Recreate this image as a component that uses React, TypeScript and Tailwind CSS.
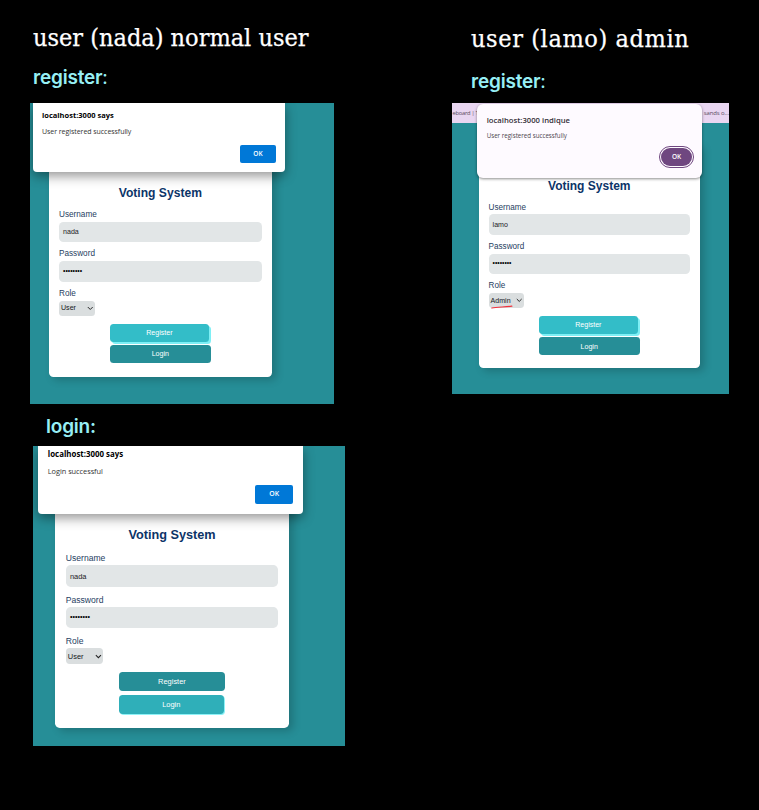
import React from "react";

type FormProps = {
  username: string;
  role: string;
  active: "register" | "login";
  underline?: boolean;
};

function Field({ label, children }: { label: string; children: React.ReactNode }) {
  return (
    <div className="flex flex-col items-start pb-[0.7em]">
      <div className="flex h-[1em] items-center pt-[0.12em]">
        <span className="text-[0.82em] leading-none text-[#26405f]">{label}</span>
      </div>
      <div className="mt-[0.23em] flex h-[2.03em] w-full items-center rounded-[0.45em] bg-[#e2e6e7] pl-[0.4em] text-[#1d2226]">
        {children}
      </div>
    </div>
  );
}

function VotingForm({ username, role, active, underline }: FormProps) {
  return (
    <div className="flex w-[22.27em] flex-col rounded-[0.45em] bg-white px-[1em] pt-[3.6em] pb-[1.37em] font-['Liberation_Sans',Arial,sans-serif] shadow-[4px_3px_8px_rgba(0,0,0,0.2)]">
      <div className="flex h-[1.2em] items-center justify-center pt-[0.1em]">
        <h2 className="text-[1.21em] leading-none font-bold text-[#0c3468]">Voting System</h2>
      </div>
      <div className="mt-[1.1em] flex flex-col">
        <Field label="Username">
          <span className="pt-[0.1em] text-[0.71em] leading-none">{username}</span>
        </Field>
        <Field label="Password">
          <span className="text-[0.68em] leading-none text-black">••••••••</span>
        </Field>
        <div className="flex h-[1em] items-center pt-[0.12em]">
          <span className="text-[0.82em] leading-none text-[#26405f]">Role</span>
        </div>
        <div className="relative mt-[0.2em] flex h-[1.54em] w-[3.57em] items-center justify-between rounded-[0.35em] bg-[#dadedf] pr-[0.15em] pl-[0.2em] text-[#16191c]">
          <span className="pt-[0.15em] text-[0.71em] leading-none">{role}</span>
          <svg viewBox="0 0 8 8" className="size-[0.65em]" fill="none" stroke="#222" strokeWidth="1.2">
            <path d="M1 2.5 4 5.5 7 2.5" />
          </svg>
          {underline && (
            <svg viewBox="0 0 22 4" className="absolute top-[1.2em] left-[0.25em] h-[0.4em] w-[2.2em]" fill="none">
              <path d="M.8 3C6 2.2 14 2 21 1.2" stroke="#f0323c" strokeWidth="1.2" strokeLinecap="round" />
            </svg>
          )}
        </div>
      </div>
      <div className="mt-[0.78em] ml-[5.07em] flex w-[10.13em] flex-col gap-[0.35em] text-white">
        {active === "register" ? (
          <>
            <div className="flex h-[1.8em] w-[9.95em] items-center justify-center rounded-[0.35em] bg-[#33bdc8] shadow-[2px_2px_0_#7eeff5]">
              <span className="pt-[0.1em] text-[0.71em] leading-none">Register</span>
            </div>
            <div className="flex h-[1.8em] items-center justify-center rounded-[0.35em] bg-[#268e97]">
              <span className="pt-[0.1em] text-[0.71em] leading-none">Login</span>
            </div>
          </>
        ) : (
          <>
            <div className="flex h-[1.8em] items-center justify-center rounded-[0.35em] bg-[#268e97]">
              <span className="text-[0.71em] leading-none">Register</span>
            </div>
            <div className="flex h-[1.8em] w-[10em] items-center justify-center rounded-[0.35em] bg-[#2fafb9] shadow-[1px_1px_0_#8df2f7]">
              <span className="text-[0.71em] leading-none">Login</span>
            </div>
          </>
        )}
      </div>
    </div>
  );
}

export default function App() {
  return (
    <main className="flex h-[810px] w-[759px] items-start overflow-hidden bg-black">
      <section className="flex w-[452px] shrink-0 flex-col items-start">
        <h1 className="mt-[22px] ml-[33px] h-[32px] font-['DejaVu_Serif_Condensed','DejaVu_Serif',serif] text-[25px] leading-[32px] whitespace-nowrap text-white [-webkit-text-stroke:0.25px_white]">
          user (nada) normal user
        </h1>
        <p className="mt-[12px] ml-[33px] h-[24px] font-['Inter',sans-serif] text-[19px] leading-[24px] font-semibold tracking-[-0.2px] text-[#97eff5]">
          register<span className="font-normal">:</span>
        </p>

        <div className="relative mt-[13px] ml-[30px] h-[301px] w-[304px] overflow-hidden bg-[#268e97] pt-[47.4px] pl-[19px] text-[10px]">
          <VotingForm username="nada" role="User" active="register" />
          <div className="absolute top-0 left-[3px] flex h-[69px] w-[252px] flex-col rounded-b-[4px] bg-white px-[9px] pt-[7px] font-['Open_Sans','Noto_Sans',sans-serif] shadow-[0_4px_12px_rgba(0,0,0,0.42)]">
            <b className="text-[7.5px] leading-[11px] text-black">localhost:3000 says</b>
            <span className="mt-[6px] text-[7px] leading-[10px] tracking-[-0.05px] text-[#333]">User registered successfully</span>
            <div className="mt-[8px] flex h-[18px] w-[36px] items-center justify-center self-end rounded-[2px] bg-[#0078d7] text-[6.5px] font-semibold text-white">
              OK
            </div>
          </div>
        </div>

        <p className="mt-[11px] ml-[46px] h-[24px] font-['Inter',sans-serif] text-[19px] leading-[24px] font-semibold tracking-[-0.2px] text-[#97eff5]">
          login:
        </p>

        <div className="relative mt-[7px] ml-[33px] h-[299.5px] w-[312px] overflow-hidden bg-[#268e97] pt-[44.7px] pl-[22.3px] text-[10.48px]">
          <VotingForm username="nada" role="User" active="login" />
          <div className="absolute top-0 left-[5.3px] flex h-[67.5px] w-[264.4px] flex-col rounded-b-[4px] bg-white px-[9.5px] pt-[3px] font-['Open_Sans','Noto_Sans',sans-serif] shadow-[0_4px_12px_rgba(0,0,0,0.42)]">
            <b className="text-[7.9px] leading-[11px] text-black">localhost:3000 says</b>
            <span className="mt-[6px] text-[7.4px] leading-[10px] tracking-[-0.05px] text-[#333]">Login successful</span>
            <div className="mt-[9px] flex h-[19px] w-[38px] items-center justify-center self-end rounded-[2px] bg-[#0078d7] text-[6.9px] font-semibold text-white">
              OK
            </div>
          </div>
        </div>
      </section>

      <section className="flex flex-col items-start">
        <h1 className="mt-[23px] ml-[19px] h-[32px] font-['DejaVu_Serif_Condensed','DejaVu_Serif',serif] text-[25px] leading-[32px] tracking-[0.6px] whitespace-nowrap text-white [-webkit-text-stroke:0.25px_white]">
          user (lamo) admin
        </h1>
        <p className="mt-[15px] ml-[19px] h-[24px] font-['Inter',sans-serif] text-[19px] leading-[24px] font-semibold tracking-[-0.2px] text-[#97eff5]">
          register<span className="font-normal">:</span>
        </p>

        <div className="relative mt-[9px] ml-[0.4px] flex h-[291px] w-[276.6px] flex-col overflow-hidden bg-[#268e97] text-[9.93px]">
          <div className="flex h-[20px] shrink-0 items-center justify-between bg-[#e9d6f1] font-['Open_Sans','Noto_Sans',sans-serif] whitespace-nowrap text-[#5a4c60]">
            <span className="text-[5.8px] tracking-[-0.25px]">eboard | T</span>
            <span className="text-[6px] tracking-[-0.1px]">sands o...</span>
          </div>
          <div className="mt-[20.6px] ml-[26.3px]">
            <VotingForm username="lamo" role="Admin" active="register" underline />
          </div>
          <div className="absolute top-[1px] left-[24.3px] flex h-[74px] w-[225.4px] flex-col rounded-[6px] bg-[#fefaff] pt-[11px] pr-[8px] pl-[10px] font-['Open_Sans','Noto_Sans',sans-serif] shadow-[0_1px_3px_rgba(0,0,0,0.45)]">
            <span className="text-[7.7px] leading-[11px] font-semibold text-[#353038]">localhost:3000 indique</span>
            <span className="mt-[5px] text-[6.2px] leading-[10px] text-[#4b454d]">User registered successfully</span>
            <div className="mt-[5px] flex h-[22px] w-[35px] items-center justify-center self-end rounded-[11px] border border-[#6f4780] p-[1px]">
              <div className="flex size-full items-center justify-center rounded-[9px] bg-[#6f4780] text-[6.5px] font-semibold text-white">
                OK
              </div>
            </div>
          </div>
        </div>
      </section>
    </main>
  );
}
